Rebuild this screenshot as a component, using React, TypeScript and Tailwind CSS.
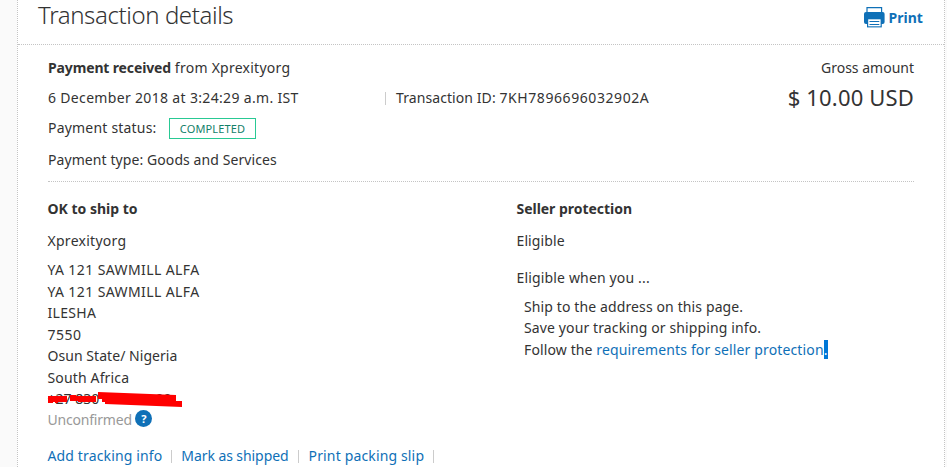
const body = "font-['Noto_Sans',sans-serif] text-[14px] leading-[20px] text-[#333]";

function PrintIcon() {
  return (
    <svg width="21" height="21" viewBox="0 0 21 21" className="block">
      <path d="M3 7V.7h14.6V7" fill="#fff" stroke="#0f70b7" strokeWidth="1.2" />
      <path d="M2 5h16.6q2 0 2 2v8q0 2-2 2H2Q0 17 0 15V7q0-2 2-2z" fill="#0f70b7" />
      <path d="M3 11.5h14.8v8.9H3z" fill="#0f70b7" />
      <path d="M4.2 12.3h12.4v7H4.2z" fill="#fff" />
      <path d="M5.5 14.5h9.8M5.5 17.5h9.8" stroke="#0f70b7" />
    </svg>
  );
}

function Separator() {
  return <span className="w-px h-[13px] bg-[#ccc]" />;
}

function Header() {
  return (
    <header className="flex h-[45px] items-start justify-between border-b border-dotted border-[#c4c4c4] pl-5 pr-[21px]">
      <h1 className="font-['Noto_Sans',sans-serif] text-[24px] font-light leading-[29px] tracking-[-0.4px] text-[#333]">
        Transaction details
      </h1>
      <a className="flex gap-[3px] pt-[7px] font-bold text-[#0f70b7]">
        <PrintIcon />
        <span className="mt-px tracking-[0.05px]">Print</span>
      </a>
    </header>
  );
}

function Summary() {
  return (
    <section className="flex h-[137px] justify-between border-b border-dotted border-[#c4c4c4] pt-[13px]">
      <div>
        <p className="tracking-[0.25px]">
          <b className="font-bold tracking-[-0.14px]">Payment received</b> from Xprexityorg
        </p>
        <div className="mt-[10px] flex items-center">
          <span className="w-[337px] tracking-[0.33px]">6 December 2018 at 3:24:29 a.m. IST</span>
          <Separator />
          <span className="ml-[10px] tracking-[0.08px]">
            Transaction ID: <span className="tracking-[0.58px]">7KH7896696032902A</span>
          </span>
        </div>
        <div className="mt-[10px] flex">
          <span className="w-[121px] tracking-[0.2px]">Payment status:</span>
          <span className="flex h-[21px] w-[87px] items-center justify-center border border-[#29c994] text-[11px] tracking-[0.15px] text-[#138069]">
            COMPLETED
          </span>
        </div>
        <p className="mt-[11px] tracking-[0.08px]">Payment type: Goods and Services</p>
      </div>
      <div className="text-right">
        <p>Gross amount</p>
        <p className="mt-[5px] text-[22px] leading-[28px] tracking-[0.16px]">$ 10.00 USD</p>
      </div>
    </section>
  );
}

function Address() {
  return (
    <div className="-ml-[0.5px] w-[469px]">
      <h2 className="font-bold">OK to ship to</h2>
      <p className="mt-3 tracking-[0.27px]">Xprexityorg</p>
      <div className="mt-2 leading-[21.5px]">
        <p className="tracking-[0.4px]">YA 121 SAWMILL ALFA</p>
        <p className="tracking-[0.4px]">YA 121 SAWMILL ALFA</p>
        <p className="tracking-[0.3px]">ILESHA</p>
        <p className="tracking-[0.5px]">7550</p>
        <p className="tracking-[0.05px]">Osun State/ Nigeria</p>
        <p className="tracking-[0.15px]">South Africa</p>
        <div className="relative flex h-[20.5px] w-[124px] justify-between leading-[21px]">
          <span>+27 830</span>
          <span>00</span>
          {/* marker strokes over the phone number */}
          <svg className="absolute left-0 top-px" width="136" height="22" viewBox="0 0 136 22">
            <path
              d="M0 7h19v6h-9v1H7v-1H5v1H0zM22 6h6v1h20v6H30v-1h-8zM50 3l78 3v6h6v6l-77-3v-2h-3v-3h-4z"
              fill="#f00"
            />
          </svg>
        </div>
        <div className="flex items-center text-[#999]">
          <span className="tracking-[-0.2px]">Unconfirmed</span>
          <span className="-mt-px ml-[3.5px] flex size-[17px] items-center justify-center rounded-full bg-[#0f70b7] text-[11px] font-bold leading-none text-white">
            ?
          </span>
        </div>
      </div>
      <div className="mt-4 flex items-center text-[#0f70b7]">
        <a className="tracking-[0.14px]">Add tracking info</a>
        <span className="mx-[9px] flex"><Separator /></span>
        <a className="tracking-[-0.08px]">Mark as shipped</a>
        <span className="ml-[9px] mr-[10px] flex"><Separator /></span>
        <a className="tracking-[0.15px]">Print packing slip</a>
        <span className="mx-[9px] flex"><Separator /></span>
      </div>
    </div>
  );
}

function SellerProtection() {
  return (
    <div>
      <h2 className="font-bold tracking-[-0.03px]">Seller protection</h2>
      <p className="mt-3 tracking-[0.1px]">Eligible</p>
      <p className="mt-[17px] tracking-[0.16px]">Eligible when you ...</p>
      <ul className="ml-[7.5px] mt-2 leading-[21.5px] tracking-[0.12px]">
        <li>Ship to the address on this page.</li>
        <li className="-mt-px mb-px">Save your tracking or shipping info.</li>
        <li>
          Follow the <a className="tracking-[0.14px] text-[#0f70b7]">requirements for seller protection</a>
          <span className="bg-[#0078d7] text-white">.</span>
        </li>
      </ul>
    </div>
  );
}

export default function App() {
  return (
    <div className="h-[467px] w-[947px] overflow-hidden bg-[#fafafa] pl-[17px] pr-[2px]">
      <main className={`h-full border-x border-dotted border-[#c4c4c4] bg-white ${body}`}>
        <Header />
        <div className="pl-[30px] pr-[30px]">
          <Summary />
          <section className="flex pt-[17px]">
            <Address />
            <SellerProtection />
          </section>
        </div>
      </main>
    </div>
  );
}
